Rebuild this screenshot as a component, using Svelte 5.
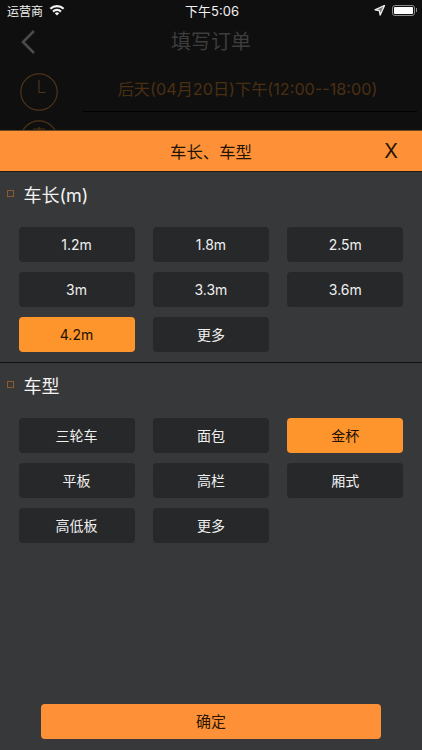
<script>
  const lengths = [
    { label: '1.2m' }, { label: '1.8m' }, { label: '2.5m' },
    { label: '3m' }, { label: '3.3m' }, { label: '3.6m' },
    { label: '4.2m', active: true }, { label: '更多', zh: true }
  ];
  const types = [
    { label: '三轮车' }, { label: '面包' }, { label: '金杯', active: true },
    { label: '平板' }, { label: '高栏' }, { label: '厢式' },
    { label: '高低板' }, { label: '更多' }
  ].map((b) => ({ ...b, zh: true }));
</script>

<div class="screen">
  <div class="behind">
    <div class="status">
      <div class="st-left">
        <span>运营商</span>
        <svg width="16" height="12" viewBox="0 0 16 12"><path d="M.6 4a10.5 10.5 0 0 1 14.8 0l-1.5 1.6a8.3 8.3 0 0 0-11.8 0zM3.3 6.8a6.7 6.7 0 0 1 9.4 0l-1.5 1.6a4.5 4.5 0 0 0-6.4 0zM5.8 9.3a3.2 3.2 0 0 1 4.4 0L8 11.6z" fill="#f4f4f4"/></svg>
      </div>
      <div class="st-time">下午5:06</div>
      <div class="st-right">
        <svg width="11" height="11" viewBox="0 0 11 11"><path d="M10.5.5 1 4.8l4.3.9.9 4.3z" fill="#777" stroke="#efefef" stroke-width="1.3" stroke-linejoin="round"/></svg>
        <span class="batt"><span class="fill"></span></span><span class="nub"></span>
      </div>
    </div>
    <div class="nav">
      <svg class="back" width="16" height="26" viewBox="0 0 16 26"><path d="M14 2 3 13l11 11" fill="none" stroke="#4a4a4a" stroke-width="2.6"/></svg>
      <div class="nav-title">填写订单</div>
    </div>
    <div class="row">
      <svg class="clock" width="38" height="38" viewBox="0 0 38 38"><circle cx="19" cy="19" r="18.2" fill="none" stroke="#4f3418" stroke-width="1.2"/><path d="M19 7v12.5h6.5" fill="none" stroke="#4f3418" stroke-width="1.2"/></svg>
      <div class="row-text">后天(04月20日)下午(12:00--18:00)</div>
    </div>
    <div class="row second">
      <svg class="clock" width="38" height="38" viewBox="0 0 38 38"><circle cx="19" cy="19" r="18.2" fill="none" stroke="#4f3418" stroke-width="1.2"/><path d="M13 9h12M19 7v4" fill="none" stroke="#4f3418" stroke-width="1.2"/></svg>
      <div class="row-text plain">预订车型</div>
    </div>
  </div>

  <div class="sheet">
    <div class="head">
      <span class="head-title">车长、车型</span>
      <span class="close">X</span>
    </div>
    <section class="sec">
      <h2><i></i>车长(m)</h2>
      <div class="grid">
        {#each lengths as b}
          <div class="btn" class:active={b.active} class:zh={b.zh}>{b.label}</div>
        {/each}
      </div>
    </section>
    <section class="sec">
      <h2><i></i>车型</h2>
      <div class="grid">
        {#each types as b}
          <div class="btn" class:active={b.active} class:zh={b.zh}>{b.label}</div>
        {/each}
      </div>
    </section>
    <div class="foot"><div class="ok">确定</div></div>
  </div>
</div>

<style>
  :global(body) { margin: 0; background: #0f0f0f; }
  .screen {
    width: 422px; height: 750px; overflow: hidden; display: flex; flex-direction: column;
    font-family: Inter, "Noto Sans CJK SC", "Liberation Sans", sans-serif;
    background: #0f0f0f;
  }
  .behind { height: 130px; flex: none; overflow: hidden; }
  .status {
    height: 20px; display: grid; grid-template-columns: 1fr auto 1fr; align-items: center;
    padding: 0 5px 0 7px; color: #f0f0f0; font-size: 12px;
  }
  .st-left { display: flex; align-items: center; gap: 6px; }
  .st-time { font-size: 13px; }
  .st-right { display: flex; align-items: center; justify-content: flex-end; }
  .st-right svg { margin-right: 7px; }
  .batt { width: 23px; height: 11px; border: 1px solid #8a8a8a; border-radius: 3px; box-sizing: border-box; padding: 1px; display: flex; }
  .fill { flex: 1; background: #fff; border-radius: 1px; }
  .nub { width: 1.5px; height: 4px; background: #8a8a8a; margin-left: 1px; }
  .nav { height: 44px; position: relative; display: flex; align-items: center; justify-content: center; }
  .back { position: absolute; left: 20px; top: 9px; }
  .nav-title { color: #3d3d3d; font-size: 20px; line-height: 44px; }
  .row { display: flex; align-items: flex-start; padding: 9px 0 0 20px; height: 47px; box-sizing: border-box; }
  .row.second { height: 40px; }
  .row-text {
    margin-left: 25px; width: 334px; height: 39px; box-sizing: border-box; padding-right: 5px; line-height: 32px;
    color: #4b2f12; font-size: 16.2px; text-align: center; border-bottom: 1px solid #000; white-space: nowrap;
  }
  .row-text.plain { border: none; font-size: 16px; line-height: 36px; }

  .sheet { flex: 1; background: #37383a; display: flex; flex-direction: column; min-height: 0; }
  .head {
    height: 42px; flex: none; background: #fe9137; position: relative; display: flex; align-items: center; justify-content: center;
    border-bottom: 1px solid #1f1a15; border-top: 1px solid #6b4a22; box-sizing: border-box;
  }
  .head-title { font-size: 16.4px; color: #241505; }
  .close { position: absolute; right: 24px; top: 6px; font-size: 20px; line-height: 28px; color: #241505; }
  .sec { padding: 0 18.5px; height: 191px; box-sizing: border-box; border-bottom: 1px solid #111; }
  .sec + .sec { border: none; }
  h2 {
    margin: 0 0 0 -12px; height: 45px; box-sizing: border-box; padding-bottom: 2px;
    display: flex; align-items: center; font-weight: 400; font-size: 18px; color: #f2f2f2;
  }
  h2 i { width: 5px; height: 5px; border: 1px solid #8d5a28; margin-right: 10px; flex: none; }
  .grid { display: grid; grid-template-columns: repeat(3, 116px); grid-auto-rows: 35px; column-gap: 18.4px; row-gap: 10px; margin-top: 10px; }
  .btn {
    background: #27282a; border-radius: 4px; color: #f0f0f0; font-size: 14px;
    display: flex; align-items: center; justify-content: center; box-sizing: border-box;
  }
  .btn.zh { padding-bottom: 2px; }
  .btn.active { background: #fe942c; color: #221200; }
  .foot { margin-top: auto; padding: 0 41px 11px; }
  .ok {
    height: 35px; box-sizing: border-box; padding-bottom: 2px; border-radius: 4px; background: #fe9137; color: #2a1602; font-size: 15px;
    display: flex; align-items: center; justify-content: center;
  }
</style>
